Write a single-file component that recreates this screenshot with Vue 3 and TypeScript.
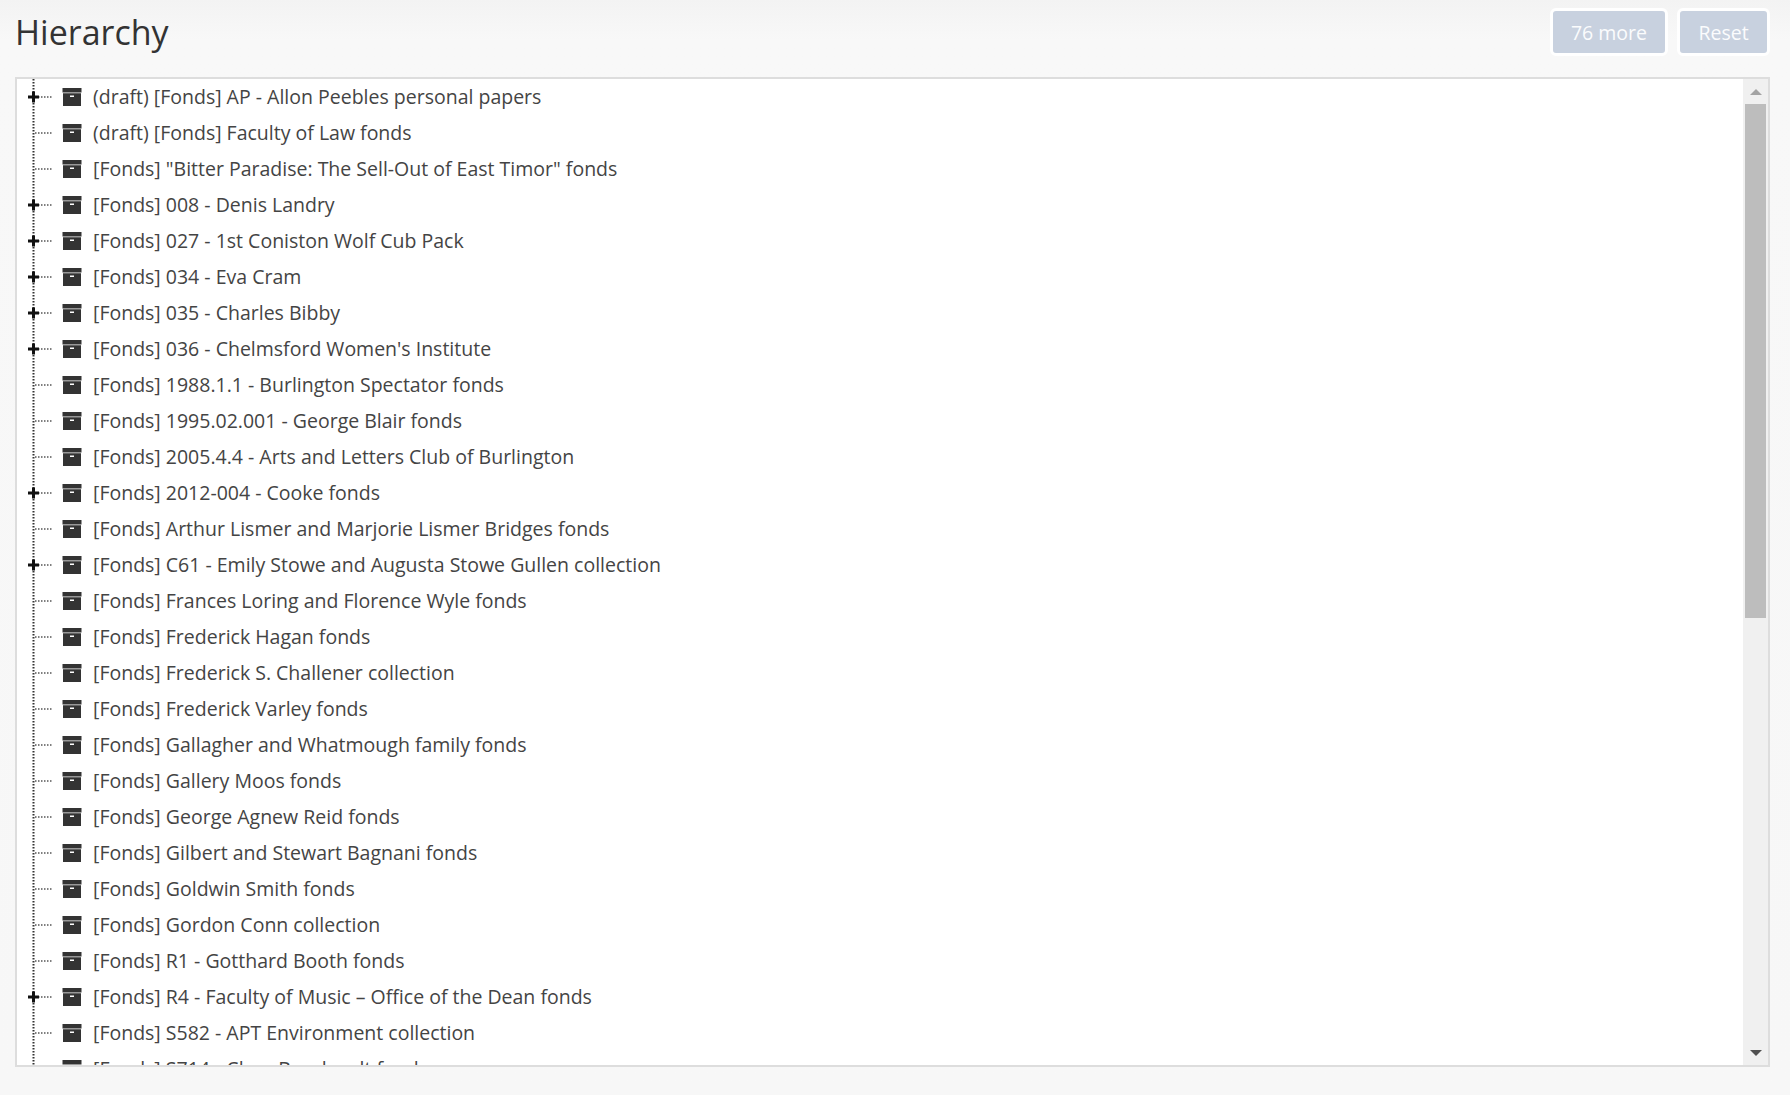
<script setup lang="ts">
interface Row { label: string; open: boolean }
const raw: [string, boolean][] = [
  ['(draft) [Fonds] AP - Allon Peebles personal papers', true],
  ['(draft) [Fonds] Faculty of Law fonds', false],
  ['[Fonds] "Bitter Paradise: The Sell-Out of East Timor" fonds', false],
  ['[Fonds] 008 - Denis Landry', true],
  ['[Fonds] 027 - 1st Coniston Wolf Cub Pack', true],
  ['[Fonds] 034 - Eva Cram', true],
  ['[Fonds] 035 - Charles Bibby', true],
  ["[Fonds] 036 - Chelmsford Women's Institute", true],
  ['[Fonds] 1988.1.1 - Burlington Spectator fonds', false],
  ['[Fonds] 1995.02.001 - George Blair fonds', false],
  ['[Fonds] 2005.4.4 - Arts and Letters Club of Burlington', false],
  ['[Fonds] 2012-004 - Cooke fonds', true],
  ['[Fonds] Arthur Lismer and Marjorie Lismer Bridges fonds', false],
  ['[Fonds] C61 - Emily Stowe and Augusta Stowe Gullen collection', true],
  ['[Fonds] Frances Loring and Florence Wyle fonds', false],
  ['[Fonds] Frederick Hagan fonds', false],
  ['[Fonds] Frederick S. Challener collection', false],
  ['[Fonds] Frederick Varley fonds', false],
  ['[Fonds] Gallagher and Whatmough family fonds', false],
  ['[Fonds] Gallery Moos fonds', false],
  ['[Fonds] George Agnew Reid fonds', false],
  ['[Fonds] Gilbert and Stewart Bagnani fonds', false],
  ['[Fonds] Goldwin Smith fonds', false],
  ['[Fonds] Gordon Conn collection', false],
  ['[Fonds] R1 - Gotthard Booth fonds', false],
  ['[Fonds] R4 - Faculty of Music – Office of the Dean fonds', true],
  ['[Fonds] S582 - APT Environment collection', false],
  ['[Fonds] S714 - Clara Bernhardt fonds', false],
]
const rows: Row[] = raw.map(([label, open]) => ({ label, open }))
</script>

<template>
  <div class="page">
    <header class="head">
      <h1 class="title">Hierarchy</h1>
      <div class="actions">
        <button class="btn more">76 more</button>
        <button class="btn reset">Reset</button>
      </div>
    </header>
    <section class="panel">
      <ul class="tree">
        <li v-for="r in rows" :key="r.label" class="row">
          <svg class="conn" width="37" height="36" viewBox="0 0 37 36">
            <path d="M16.5 0V36" stroke="#333" stroke-width="2" stroke-dasharray="1.5 1.5" fill="none" />
            <path d="M18 18H35" stroke="#555" stroke-width="1.5" stroke-dasharray="1.5 1.5" fill="none" />
            <path v-if="r.open" d="M11 18H22M16.5 12.5V23.5" stroke="#111" stroke-width="3" fill="none" />
          </svg>
          <svg class="box" width="20" height="18" viewBox="0 0 20 18">
            <path d="M0.5 0H19.5V4.5H0.5Z M1 5.3H19V18H1Z" fill="#333" />
            <rect x="8" y="7.5" width="4" height="1.5" fill="#fff" />
          </svg>
          <span class="label">{{ r.label }}</span>
        </li>
      </ul>
      <aside class="scroll">
        <span class="arrow up"></span>
        <div class="track"><div class="thumb"></div></div>
        <span class="arrow down"></span>
      </aside>
    </section>
  </div>
</template>

<style>
html, body { margin: 0; background: #f7f7f7; }
</style>

<style scoped>
.page {
  height: 1095px;
  box-sizing: border-box;
  padding: 8px 20px 28px 15px;
  display: flex;
  flex-direction: column;
  font-family: "Open Sans", "Noto Sans", sans-serif;
  background: linear-gradient(180deg, #f3f3f3 0, #f8f8f8 40px, #f7f7f7 100%);
  overflow: hidden;
}
.head {
  height: 69px;
  flex: none;
  display: flex;
  justify-content: space-between;
  align-items: flex-start;
}
.title {
  margin: 0;
  font-size: 34px;
  line-height: 48px;
  font-weight: 400;
  color: #333;
}
.actions { display: flex; gap: 9px; }
.btn {
  height: 48px;
  box-sizing: border-box;
  border: 3px solid #fff;
  border-radius: 6px;
  background: #c8d1df;
  color: #fbfcfd;
  font: 400 19.5px "Open Sans", sans-serif;
  padding: 0;
}
.more { width: 118px; }
.reset { width: 93px; }
.panel {
  flex: 1;
  min-height: 0;
  display: flex;
  background: #fff;
  border: 2px solid #ddd;
}
.tree {
  flex: 1;
  min-width: 0;
  margin: 0;
  padding: 0;
  list-style: none;
  overflow: hidden;
}
.row {
  height: 36px;
  display: flex;
  align-items: center;
  font-size: 19.5px;
  color: #444;
}
.conn { flex: none; margin-right: 8px; }
.box { flex: none; margin-right: 11px; }
.label { white-space: nowrap; padding-bottom: 2px; }
.scroll {
  flex: none;
  width: 25px;
  background: #f0f0f0;
  display: flex;
  flex-direction: column;
  align-items: center;
}
.arrow { flex: none; width: 0; height: 0; border-left: 6px solid transparent; border-right: 6px solid transparent; }
.arrow.up { margin: 10px 0 9px; border-bottom: 6px solid #a3a3a3; }
.arrow.down { margin: 6px 0 9px; border-top: 6px solid #505050; }
.track { flex: 1; align-self: stretch; padding: 0 2px; }
.thumb { height: 514px; background: #bdbdbd; }
</style>
